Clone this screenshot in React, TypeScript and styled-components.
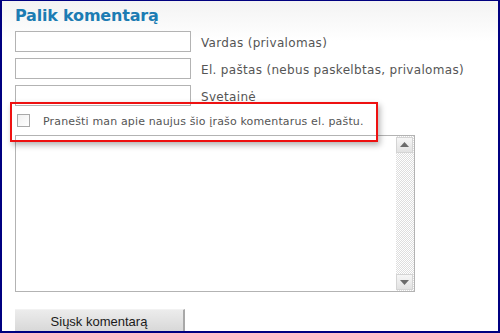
import React from 'react';
import styled, { createGlobalStyle } from 'styled-components';

const GlobalStyle = createGlobalStyle`
  html, body {
    margin: 0;
    padding: 0;
    background: #ffffff;
  }
`;

const Frame = styled.div`
  width: 500px;
  height: 333px;
  box-sizing: border-box;
  border-style: solid;
  border-color: #000080;
  border-width: 1px 2px 2px 2px;
  overflow: hidden;
  padding: 4px 0 0 13px;
  background: linear-gradient(#f3f3f3, #ffffff 40px);
  display: flex;
  flex-direction: column;
  font-family: 'DejaVu Sans', Verdana, sans-serif;
`;

const Title = styled.h2`
  margin: 0;
  font-size: 16px;
  line-height: 22px;
  font-weight: bold;
  letter-spacing: -0.2px;
  color: #1c7cb3;
`;

const Fields = styled.div`
  display: flex;
  flex-direction: column;
  gap: 6px;
  margin-top: 4px;
`;

const Row = styled.div`
  display: flex;
  align-items: center;
  gap: 10px;
`;

const TextInput = styled.input`
  width: 176px;
  height: 21px;
  box-sizing: border-box;
  margin: 0;
  border: 1px solid #b3b3b3;
  background: #ffffff;
  outline: none;
`;

const Label = styled.label`
  font-size: 12px;
  letter-spacing: 0.32px;
  color: #555555;
  padding-top: 2px;
`;

const NotifyRow = styled.div`
  position: relative;
  display: flex;
  align-items: center;
  gap: 13px;
  height: 30px;
  padding-left: 2px;
  box-sizing: border-box;
`;

const Highlight = styled.div`
  position: absolute;
  top: -4px;
  left: -5px;
  width: 368px;
  height: 40px;
  box-sizing: border-box;
  border: 2px solid #ee1111;
  box-shadow: 2px 3px 6px rgba(0, 0, 0, 0.3);
  pointer-events: none;
  z-index: 2;
`;

const CheckBox = styled.span`
  width: 13px;
  height: 13px;
  box-sizing: border-box;
  border: 1px solid #a9a9a9;
  background: linear-gradient(135deg, #f0f0f0, #ffffff);
  flex-shrink: 0;
`;

const NotifyText = styled.span`
  font-size: 11px;
  letter-spacing: 0.15px;
  color: #555555;
  padding-top: 2px;
`;

const TextArea = styled.div`
  width: 400px;
  height: 164px;
  box-sizing: border-box;
  border: 1px solid #b3b3b3;
  background: #ffffff;
  display: flex;
`;

const Editable = styled.div`
  flex: 1;
`;

const Scrollbar = styled.div`
  width: 17px;
  padding: 1px 1px 1px 0;
  display: flex;
  flex-direction: column;
  background: repeating-conic-gradient(#dedede 0 25%, #ffffff 0 50%) 0 0 / 2px 2px;
`;

const ScrollButton = styled.div`
  height: 16px;
  box-sizing: border-box;
  border: 1px solid #d4d4d4;
  background: linear-gradient(#f6f6f6, #e2e2e2);
  display: flex;
  align-items: center;
  justify-content: center;
`;

const Track = styled.div`
  flex: 1;
`;

const SubmitButton = styled.button`
  margin-top: 17px;
  width: 170px;
  height: 22px;
  flex-shrink: 0;
  box-sizing: border-box;
  border: none;
  border-top: 1px solid #f2f2f2;
  border-right: 2px solid #a8a8a8;
  background: linear-gradient(#ececec, #d8d8d8);
  font-family: 'Liberation Sans', Arial, sans-serif;
  font-size: 13px;
  color: #1a1a1a;
  padding: 1px 0 0;
  text-align: center;
`;

const Arrow = ({ up }: { up: boolean }) => (
  <svg width="9" height="5" viewBox="0 0 9 5">
    <path d={up ? 'M0 5 L4.5 0 L9 5 Z' : 'M0 0 L4.5 5 L9 0 Z'} fill="#6b6b6b" />
  </svg>
);

export default function App() {
  return (
    <>
      <GlobalStyle />
      <Frame>
        <Title>Palik komentarą</Title>
        <Fields>
          <Row>
            <TextInput type="text" />
            <Label>Vardas (privalomas)</Label>
          </Row>
          <Row>
            <TextInput type="text" />
            <Label>El. paštas (nebus paskelbtas, privalomas)</Label>
          </Row>
          <Row>
            <TextInput type="text" />
            <Label>Svetainė</Label>
          </Row>
        </Fields>
        <NotifyRow>
          <Highlight />
          <CheckBox />
          <NotifyText>Pranešti man apie naujus šio įrašo komentarus el. paštu.</NotifyText>
        </NotifyRow>
        <TextArea>
          <Editable />
          <Scrollbar>
            <ScrollButton>
              <Arrow up />
            </ScrollButton>
            <Track />
            <ScrollButton>
              <Arrow up={false} />
            </ScrollButton>
          </Scrollbar>
        </TextArea>
        <SubmitButton>Siųsk komentarą</SubmitButton>
      </Frame>
    </>
  );
}
